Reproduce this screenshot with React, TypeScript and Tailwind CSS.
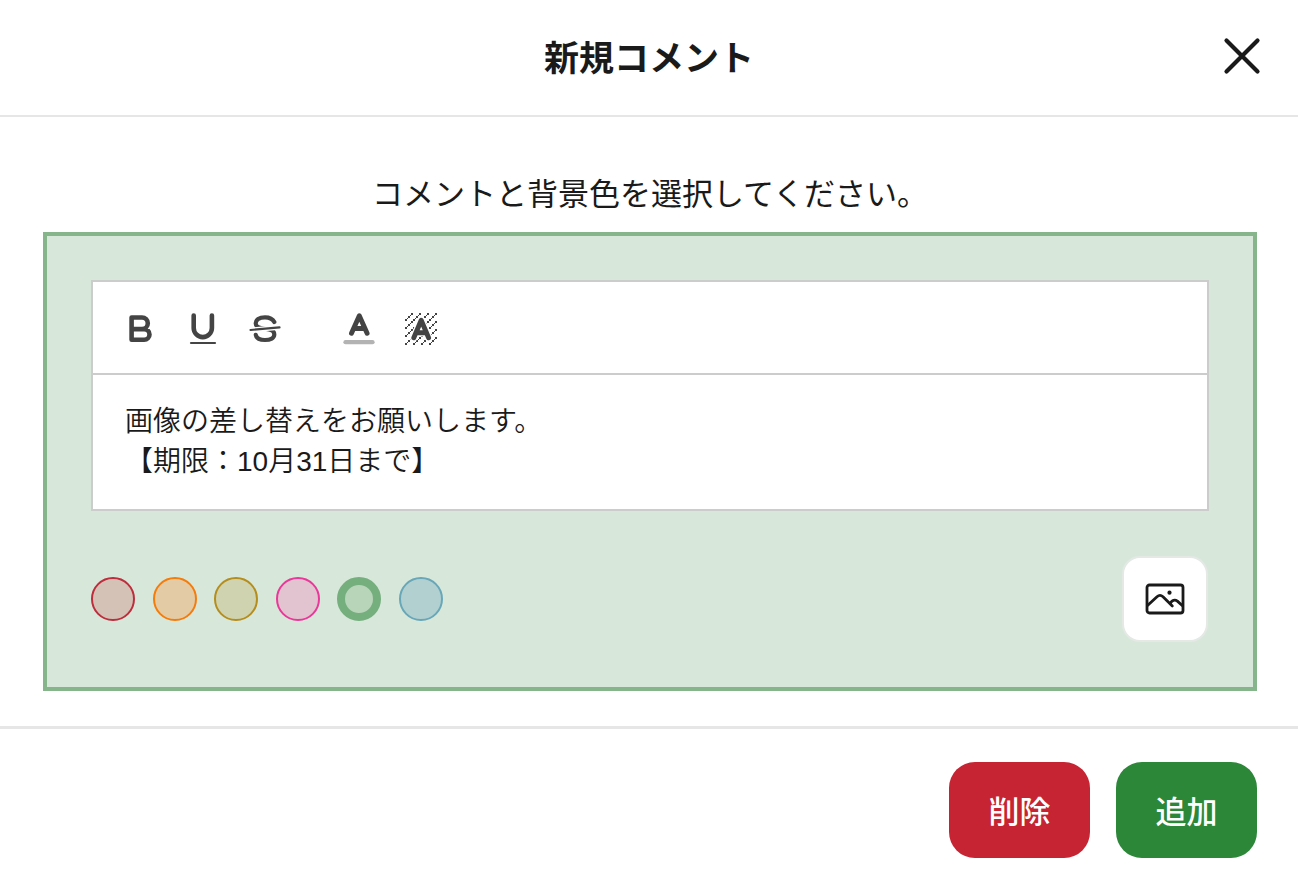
import { useState } from 'react'
import type { ReactNode } from 'react'

const COLORS = [
  { id: 'red', label: '赤', style: 'border-[#bd2d3c] bg-[#d5c2b7]' },
  { id: 'orange', label: 'オレンジ', style: 'border-[#f57c0b] bg-[#e3cba6]' },
  { id: 'yellow', label: '黄', style: 'border-[#b58d1c] bg-[#cfd3b0]' },
  { id: 'pink', label: 'ピンク', style: 'border-[#eb3799] bg-[#e1c4cf]' },
  { id: 'green', label: '緑', style: 'border-[#76af7e] bg-[#b8d4b9]' },
  { id: 'blue', label: '青', style: 'border-[#67a7b8] bg-[#b3d0d0]' },
]

function ToolButton({ label, children }: { label: string; children: ReactNode }) {
  return (
    <button type="button" aria-label={label} className="size-11 shrink-0 text-[#444]">
      <svg
        viewBox="0 0 44 44"
        className="size-11"
        fill="none"
        stroke="currentColor"
        strokeWidth="4.6"
        strokeLinecap="round"
        strokeLinejoin="round"
      >
        {children}
      </svg>
    </button>
  )
}

function Toolbar() {
  return (
    <div className="flex gap-[18px] border-b-2 border-[#ccc] pt-6 pr-6 pb-[23px] pl-[25px]">
      <ToolButton label="太字">
        <path d="M13.6 11.5H24a5.7 5.7 0 0 1 0 11.6H13.6M24 23.1h2.2a5.3 5.3 0 0 1 0 10.6H13.6V11.5" />
      </ToolButton>
      <ToolButton label="下線">
        <path d="M13.7 9.5V22a9.1 9.1 0 0 0 18.2 0V9.5" />
        <path d="M11 37h24" strokeWidth="2.2" />
      </ToolButton>
      <ToolButton label="取り消し線">
        <path
          d="M32.3 16C30.5 12.5 27 11.3 23 11.3c-6 0-9.3 2.7-9.3 6 0 2.7 2.3 4.2 5.3 4.7l8 1.5c3 .5 5.3 2.3 5.3 5C32.3 32 28.5 34 23 34c-4.5 0-8.5-1.5-9.2-5.2"
          strokeWidth="4.2"
        />
        <path d="M8 24l30-2.7" stroke="#fff" strokeWidth="5" strokeLinecap="butt" />
        <path d="M8.5 24l29-2.6" strokeWidth="2.2" />
      </ToolButton>
      <div className="ml-[33px] flex gap-[18px]">
        <ToolButton label="文字色">
          <path d="M14.5 27.3L22.3 9.7l7.8 17.6M17 22.5h10.6" strokeWidth="4.9" />
          <path d="M8.5 36.2h27" stroke="#b3b3b3" strokeWidth="4.3" />
        </ToolButton>
        <ToolButton label="文字の背景色">
          <defs>
            <pattern id="hatch" x="6" y="7" width="8" height="8" patternUnits="userSpaceOnUse">
              <path
                d="M0 6h2v2H0zM3 3h2v2H3zM6 0h2v2H6zM2 5h1v1H2zM5 2h1v1H5z"
                fill="currentColor"
                stroke="none"
              />
            </pattern>
          </defs>
          <path d="M6 7h32v32H6z" fill="url(#hatch)" stroke="none" />
          <path d="M14.8 31.8L22.2 14.3l7.4 17.5M17 26.8h10.4" stroke="#fff" strokeWidth="7.5" />
          <path d="M14.8 31.8L22.2 14.3l7.4 17.5M17 26.8h10.4" strokeWidth="4.9" />
        </ToolButton>
      </div>
    </div>
  )
}

export default function App() {
  const [color, setColor] = useState('green')
  const [comment, setComment] = useState('画像の差し替えをお願いします。\n【期限：10月31日まで】')

  return (
    <main className="bg-white font-['Liberation_Sans','Noto_Sans_CJK_JP',sans-serif] text-[#1a1a1a]">
      <header className="grid grid-cols-[1fr_auto_1fr] items-center border-b-2 border-[#e6e6e6] px-8 pt-8 pb-[35px]">
        <h1 className="col-start-2 pt-1.5 text-[35px] leading-[42px] font-bold">新規コメント</h1>
        <button type="button" aria-label="閉じる" className="size-12 justify-self-end">
          <svg viewBox="0 0 48 48" className="size-12" stroke="currentColor" strokeWidth="4.2" strokeLinecap="round">
            <path d="M8.5 8.5l31 31M39.5 8.5l-31 31" />
          </svg>
        </button>
      </header>

      <section className="pt-[54px] pr-[41px] pb-[35px] pl-[43px]">
        <p className="mb-[13px] text-center text-[31px] leading-12">コメントと背景色を選択してください。</p>

        <div className="border-4 border-[#87b58b] bg-[#d7e7da] px-11 pt-11 pb-[45px]">
          <div className="border-2 border-[#ccc] bg-white">
            <Toolbar />
            <textarea
              aria-label="コメント"
              rows={2}
              value={comment}
              onChange={(e) => setComment(e.target.value)}
              className="block w-full resize-none overflow-hidden px-8 py-[27px] text-[28px] leading-10 font-[350] outline-none"
            />
          </div>

          <div className="mt-[45px] flex items-center justify-between">
            <div role="radiogroup" aria-label="背景色" className="flex w-[352px] justify-between">
              {COLORS.map((c) => (
                <input
                  key={c.id}
                  type="radio"
                  name="color"
                  aria-label={c.label}
                  checked={color === c.id}
                  onChange={() => setColor(c.id)}
                  className={`size-11 appearance-none rounded-full border-2 checked:border-8 ${c.style}`}
                />
              ))}
            </div>
            <button
              type="button"
              aria-label="画像を追加"
              className="mr-px flex size-[86px] items-center justify-center rounded-[18px] border-2 border-[#e4e9e5] bg-white"
            >
              <svg
                viewBox="0 0 40 32"
                className="h-8 w-10"
                fill="none"
                stroke="currentColor"
                strokeWidth="2.8"
                strokeLinecap="round"
                strokeLinejoin="round"
              >
                <rect x="2" y="2" width="36" height="28" rx="2.5" />
                <path d="M2.500 22.500L12 13.700c2-1.800 4-1.800 6 0l9.300 9.300M25.500 21c0-1.500.5-2.200 1.700-3 1.700-1.200 3.500-1.200 5.200.1l5.100 4.700" />
                <circle cx="24.500" cy="9.700" r="2.1" fill="currentColor" stroke="none" />
              </svg>
            </button>
          </div>
        </div>
      </section>

      <footer className="flex justify-end gap-[26px] border-t-3 border-[#e6e6e6] pt-[33px] pr-[41px] pb-6 pl-[43px]">
        <button type="button" className="h-24 w-[141px] rounded-[26px] bg-[#c62333] pt-1.5 text-[31px] font-medium text-white">
          削除
        </button>
        <button type="button" className="h-24 w-[141px] rounded-[26px] bg-[#2c8739] pt-1.5 text-[31px] font-medium text-white">
          追加
        </button>
      </footer>
    </main>
  )
}
